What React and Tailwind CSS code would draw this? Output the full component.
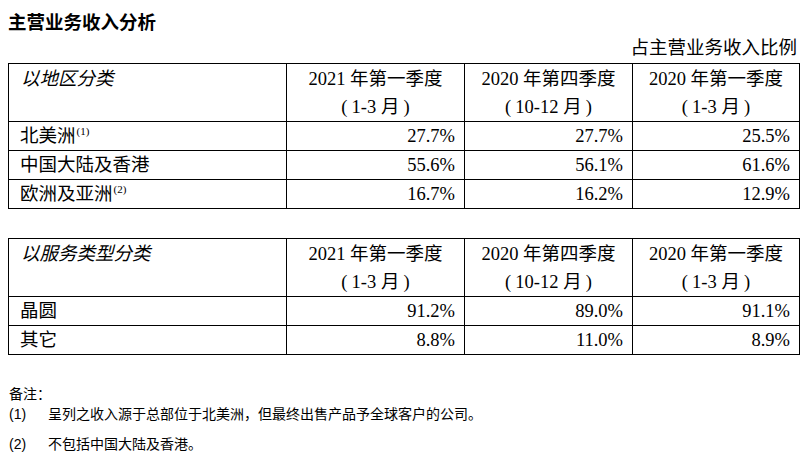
import React from 'react';

const serif = { fontFamily: '"Liberation Serif", "Noto Sans CJK SC", serif' };

const periods = [
  ['2021 年第一季度', '1-3 月'],
  ['2020 年第四季度', '10-12 月'],
  ['2020 年第一季度', '1-3 月'],
];

const regionRows = [
  { label: '北美洲', note: '(1)', values: ['27.7%', '27.7%', '25.5%'] },
  { label: '中国大陆及香港', values: ['55.6%', '56.1%', '61.6%'] },
  { label: '欧洲及亚洲', note: '(2)', values: ['16.7%', '16.2%', '12.9%'] },
];

const serviceRows = [
  { label: '晶圆', values: ['91.2%', '89.0%', '91.1%'] },
  { label: '其它', values: ['8.8%', '11.0%', '8.9%'] },
];

const RevenueTable = ({ heading, rows }) => (
  <table className="w-[791px] table-fixed border-collapse text-[18.5px] text-black" style={serif}>
    <colgroup>
      <col className="w-[278px]" />
      <col className="w-[178px]" />
      <col className="w-[168px]" />
      <col className="w-[167px]" />
    </colgroup>
    <thead>
      <tr className="h-[57px]">
        <th className="border border-black pl-[12px] pt-[1px] align-top text-left font-normal italic leading-[28px]">
          {heading}
        </th>
        {periods.map(([line1, months], i) => (
          <th key={i} className="border border-black pt-[1px] align-top text-center font-normal leading-[28px]">
            <div>{line1}</div>
            <div>
              <span className="inline-block w-[1em] pl-[4px] text-center">(</span>
              {months}
              <span className="inline-block w-[1em] pr-[4px] text-center">)</span>
            </div>
          </th>
        ))}
      </tr>
    </thead>
    <tbody>
      {rows.map((row, i) => (
        <tr key={i} className="h-[29px]">
          <td className="border border-black py-0 pl-[11px] leading-[26px]">
            {row.label}
            {row.note && (
              <span className="relative -top-[7px] ml-[1px] text-[11px] leading-none">{row.note}</span>
            )}
          </td>
          {row.values.map((v, j) => (
            <td key={j} className="border border-black py-0 pr-[9px] text-right leading-[26px]">
              {v}
            </td>
          ))}
        </tr>
      ))}
    </tbody>
  </table>
);

export default function App() {
  return (
    <div className="w-[809px] h-[457px] bg-white text-black overflow-hidden">
      <div
        className="pl-[8px] pt-[8px] text-[18.5px] font-bold leading-[26px]"
        style={{ fontFamily: '"Noto Sans CJK SC", sans-serif' }}
      >
        主营业务收入分析
      </div>

      <div className="ml-[8px] w-[791px]">
        <div className="text-right pr-[2px] text-[18.5px] leading-[29px]" style={serif}>
          占主营业务收入比例
        </div>
        <RevenueTable heading="以地区分类" rows={regionRows} />
        <div className="h-[29px]" />
        <RevenueTable heading="以服务类型分类" rows={serviceRows} />
      </div>

      <div
        className="pl-[9px] pt-[29px] text-[14px] leading-[20px]"
        style={{ fontFamily: '"Liberation Sans", "Noto Sans CJK SC", sans-serif' }}
      >
        <div>备注：</div>
        <div className="flex">
          <span className="w-[39px]">(1)</span>
          <span>呈列之收入源于总部位于北美洲，但最终出售产品予全球客户的公司。</span>
        </div>
        <div className="flex mt-[10px]">
          <span className="w-[39px]">(2)</span>
          <span>不包括中国大陆及香港。</span>
        </div>
      </div>
    </div>
  );
}
